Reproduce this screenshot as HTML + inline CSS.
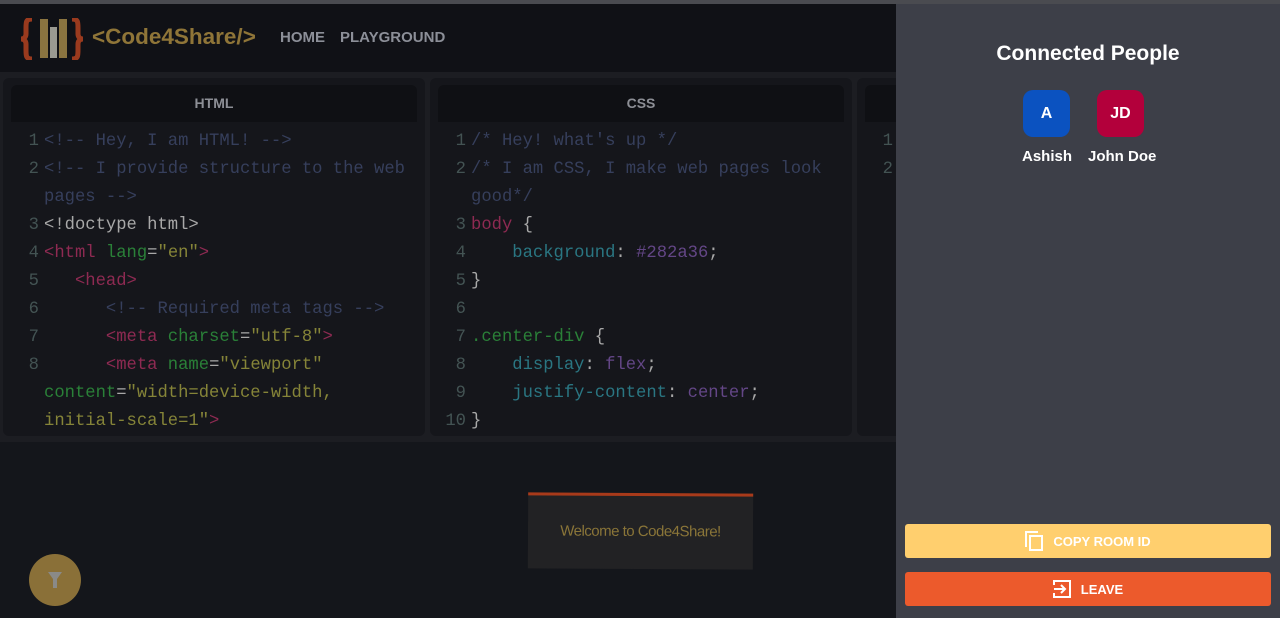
<!DOCTYPE html>
<html><head><meta charset="utf-8"><style>
*{margin:0;padding:0;box-sizing:border-box}
body{width:1280px;height:618px;overflow:hidden;background:#14161b;font-family:"Liberation Sans",sans-serif;position:relative}
.strip{position:absolute;left:0;top:0;width:1280px;height:4px;background:#4a4b50}
.hdr{position:absolute;left:0;top:4px;width:896px;height:68px;background:#101116}
.brand{position:absolute;left:92px;top:20px;color:#8f7538;font-weight:bold;font-size:22.5px}
.nav{position:absolute;top:25px;color:#8c8f98;font-weight:bold;font-size:15px}
.ed{position:absolute;left:0;top:72px;width:896px;height:370px;background:#1c1d22}
.pane{position:absolute;top:78px;height:358px;background:#15161b;border-radius:6px;overflow:hidden}
.ph{position:absolute;left:8px;right:8px;top:7px;height:37px;background:#0f1014;border-radius:6px 6px 0 0;color:#8d8f96;font-weight:bold;font-size:14px;text-align:center;line-height:37px}
.code{position:absolute;left:0;top:50px;font-family:"Liberation Mono",monospace;font-size:17.2px;line-height:28px;color:#a8a8a8;white-space:pre}
.ln{display:inline-block;width:36px;text-align:right;color:#435353;margin-right:5px}
.c{color:#363f5c}.t{color:#8e2a52}.a{color:#2a8038}.s{color:#858438}.p{color:#2a7682}.v{color:#634686}
.side{position:absolute;left:896px;top:4px;width:384px;height:614px;background:#3d3f48}
.btn{position:absolute;left:9px;width:366px;height:34px;border-radius:3px;color:#fff;font-weight:bold;font-size:13px;display:flex;align-items:center;justify-content:center;gap:10px}
.av{position:absolute;top:86px;width:47px;height:47px;border-radius:10px;color:#fff;font-weight:bold;font-size:16px;text-align:center;line-height:47px}
.nm{position:absolute;top:144px;color:#fff;font-weight:bold;font-size:15px}
</style></head><body>
<div class="strip"></div>
<div class="hdr">
<svg style="position:absolute;left:20px;top:14px" width="66" height="42" viewBox="0 0 66 42">
<path d="M12 1 C6 1 6 4 6 10 L6 16 C6 19 4 21 1 21 C4 21 6 23 6 26 L6 32 C6 38 6 41 12 41" fill="none" stroke="#9a3a1e" stroke-width="5"/>
<rect x="20" y="1" width="8" height="39" fill="#8a7440"/>
<rect x="30" y="9" width="7" height="31" fill="#9a9a92"/>
<rect x="39" y="1" width="8" height="39" fill="#8a7440"/>
<path d="M52 1 C58 1 58 4 58 10 L58 16 C58 19 60 21 63 21 C60 21 58 23 58 26 L58 32 C58 38 58 41 52 41" fill="none" stroke="#9a3a1e" stroke-width="5"/>
</svg>
<div class="brand">&lt;Code4Share/&gt;</div>
<div class="nav" style="left:280px">HOME</div>
<div class="nav" style="left:340px">PLAYGROUND</div>
</div>
<div class="ed"></div>
<div class="pane" style="left:3px;width:422px"><div class="ph">HTML</div>
<div class="code"><span class="ln">1</span><span class="c">&lt;!-- Hey, I am HTML! --&gt;</span>
<span class="ln">2</span><span class="c">&lt;!-- I provide structure to the web</span>
<span class="ln"></span><span class="c">pages --&gt;</span>
<span class="ln">3</span>&lt;!doctype html&gt;
<span class="ln">4</span><span class="t">&lt;html</span> <span class="a">lang</span>=<span class="s">"en"</span><span class="t">&gt;</span>
<span class="ln">5</span>   <span class="t">&lt;head&gt;</span>
<span class="ln">6</span>      <span class="c">&lt;!-- Required meta tags --&gt;</span>
<span class="ln">7</span>      <span class="t">&lt;meta</span> <span class="a">charset</span>=<span class="s">"utf-8"</span><span class="t">&gt;</span>
<span class="ln">8</span>      <span class="t">&lt;meta</span> <span class="a">name</span>=<span class="s">"viewport"</span>
<span class="ln"></span><span class="a">content</span>=<span class="s">"width=device-width,</span>
<span class="ln"></span><span class="s">initial-scale=1"</span><span class="t">&gt;</span></div></div>
<div class="pane" style="left:430px;width:422px"><div class="ph">CSS</div>
<div class="code"><span class="ln">1</span><span class="c">/* Hey! what's up */</span>
<span class="ln">2</span><span class="c">/* I am CSS, I make web pages look</span>
<span class="ln"></span><span class="c">good*/</span>
<span class="ln">3</span><span class="t">body</span> {
<span class="ln">4</span>    <span class="p">background</span>: <span class="v">#282a36</span>;
<span class="ln">5</span>}
<span class="ln">6</span>
<span class="ln">7</span><span class="a">.center-div</span> {
<span class="ln">8</span>    <span class="p">display</span>: <span class="v">flex</span>;
<span class="ln">9</span>    <span class="p">justify-content</span>: <span class="v">center</span>;
<span class="ln">10</span>}</div></div>
<div class="pane" style="left:857px;width:60px"><div class="ph" style="right:-20px"></div>
<div class="code"><span class="ln">1</span>
<span class="ln">2</span></div></div>
<div style="position:absolute;left:528px;top:493px;width:225px;height:76px;background:#222224;border-top:3px solid #a83a1a;transform:rotate(0.3deg);color:#8a7538;font-size:15px;text-align:center;line-height:72px;letter-spacing:-0.5px">Welcome to Code4Share!</div>
<div style="position:absolute;left:29px;top:554px;width:52px;height:52px;border-radius:50%;background:#8a7038">
<svg style="position:absolute;left:19px;top:18px" width="14" height="16" viewBox="0 0 14 16"><path d="M0 0H14L9 7V16H5V7Z" fill="#8a8a88"/></svg></div>
<div class="side">
<div style="position:absolute;left:0;width:384px;top:38px;text-align:center;color:#fff;font-weight:bold;font-size:21px">Connected People</div>
<div class="av" style="left:127px;background:#0b52c0">A</div>
<div class="av" style="left:201px;background:#b3003b">JD</div>
<div class="nm" style="left:126px">Ashish</div>
<div class="nm" style="left:192px">John Doe</div>
<div class="btn" style="top:520px;background:#ffcf6e"><svg width="18" height="20" viewBox="0 0 18 20"><path d="M1 16V1H13" fill="none" stroke="#fff" stroke-width="2"/><rect x="5" y="5" width="12" height="14" fill="none" stroke="#fff" stroke-width="2"/></svg>COPY ROOM ID</div>
<div class="btn" style="top:568px;background:#ec5a2c"><svg width="18" height="18" viewBox="0 0 18 18"><path d="M1 5V1H17V17H1V13" fill="none" stroke="#fff" stroke-width="2"/><path d="M1 9H12M8 5L12 9L8 13" fill="none" stroke="#fff" stroke-width="2"/></svg>LEAVE</div>
</div>
</body></html>
